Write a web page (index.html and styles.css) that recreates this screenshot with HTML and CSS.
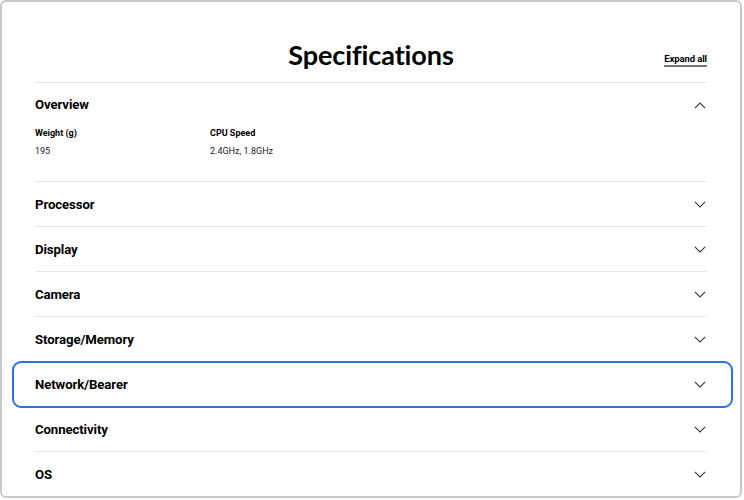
FILE: index.html
```html
<!DOCTYPE html>
<html>
<head>
<meta charset="utf-8">
<link rel="stylesheet" href="styles.css">
</head>
<body>
<div class="frame">
  <div class="specs">
    <header class="specs-head">
      <span></span>
      <h1 class="specs-title">Specifications</h1>
      <a class="expand-all" href="#">Expand all</a>
    </header>

    <section class="spec-section open">
      <div class="spec-row overview-row">
        <span class="spec-name">Overview</span>
        <svg class="chev up" viewBox="0 0 12 7" width="12" height="7"><polyline points="0.8,6.2 6,1 11.2,6.2"/></svg>
      </div>
      <div class="spec-grid">
        <div class="spec-item">
          <div class="spec-label">Weight (g)</div>
          <div class="spec-value">195</div>
        </div>
        <div class="spec-item">
          <div class="spec-label">CPU Speed</div>
          <div class="spec-value">2.4GHz, 1.8GHz</div>
        </div>
      </div>
    </section>

    <section class="spec-section">
      <div class="spec-row"><span class="spec-name">Processor</span><svg class="chev" viewBox="0 0 12 7" width="12" height="7"><polyline points="0.8,0.8 6,6 11.2,0.8"/></svg></div>
    </section>
    <section class="spec-section">
      <div class="spec-row"><span class="spec-name">Display</span><svg class="chev" viewBox="0 0 12 7" width="12" height="7"><polyline points="0.8,0.8 6,6 11.2,0.8"/></svg></div>
    </section>
    <section class="spec-section">
      <div class="spec-row"><span class="spec-name">Camera</span><svg class="chev" viewBox="0 0 12 7" width="12" height="7"><polyline points="0.8,0.8 6,6 11.2,0.8"/></svg></div>
    </section>
    <section class="spec-section">
      <div class="spec-row"><span class="spec-name">Storage/Memory</span><svg class="chev" viewBox="0 0 12 7" width="12" height="7"><polyline points="0.8,0.8 6,6 11.2,0.8"/></svg></div>
    </section>
    <section class="spec-section focused">
      <div class="spec-row"><span class="spec-name">Network/Bearer</span><svg class="chev" viewBox="0 0 12 7" width="12" height="7"><polyline points="0.8,0.8 6,6 11.2,0.8"/></svg></div>
    </section>
    <section class="spec-section">
      <div class="spec-row"><span class="spec-name">Connectivity</span><svg class="chev" viewBox="0 0 12 7" width="12" height="7"><polyline points="0.8,0.8 6,6 11.2,0.8"/></svg></div>
    </section>
    <section class="spec-section">
      <div class="spec-row"><span class="spec-name">OS</span><svg class="chev" viewBox="0 0 12 7" width="12" height="7"><polyline points="0.8,0.8 6,6 11.2,0.8"/></svg></div>
    </section>
  </div>
</div>
</body>
</html>
```

FILE: styles.css
```css
* { box-sizing: border-box; }
html, body { margin: 0; padding: 0; background: #ffffff; }
body {
  font-family: Roboto, "Liberation Sans", Arial, sans-serif;
  color: #000;
  width: 744px;
  height: 500px;
  overflow: hidden;
}
.frame {
  width: 742px;
  height: 498px;
  border: 2px solid #c9c9c9;
  border-radius: 6px;
  overflow: hidden;
  padding: 0 33px 0 33px;
  background: #fff;
}
.specs { width: 672px; }
.specs-head {
  display: grid;
  grid-template-columns: 1fr auto 1fr;
  align-items: end;
  padding-top: 36px;
  padding-bottom: 10px;
  border-bottom: 1px solid #e6e6e6;
}
.specs-title {
  margin: 0;
  font-family: Lato, "Open Sans", sans-serif;
  font-weight: 700;
  font-size: 27px;
  line-height: 34px;
  letter-spacing: -0.1px;
  color: #000;
}
.expand-all {
  justify-self: end;
  margin-bottom: 5px;
  font-size: 9.5px;
  font-weight: 700;
  line-height: 12px;
  color: #000;
  text-decoration: none;
  border-bottom: 2px solid #777;
  letter-spacing: -0.1px;
}
.spec-section {
  position: relative;
  border-bottom: 1px solid #e6e6e6;
}
.spec-row {
  height: 44px;
  display: flex;
  align-items: center;
  justify-content: space-between;
}
.overview-row .spec-name { margin-top: -1px; }
.spec-name {
  font-size: 13.2px;
  font-weight: 700;
  letter-spacing: -0.1px;
}
.chev {
  margin-right: 1px;
  fill: none;
  stroke: #3a3a3a;
  stroke-width: 1.1;
}
.spec-grid {
  display: grid;
  grid-template-columns: 175px 1fr;
  padding-bottom: 24px;
}
.spec-label {
  font-size: 9px;
  font-weight: 700;
  line-height: 12px;
}
.spec-value {
  margin-top: 6px;
  font-size: 9px;
  line-height: 12px;
  color: #222;
}
.focused::after {
  content: "";
  position: absolute;
  left: -23px;
  right: -26px;
  top: -1px;
  bottom: -2px;
  border: 2px solid #2a72e6;
  border-radius: 9px;
  pointer-events: none;
}
```
